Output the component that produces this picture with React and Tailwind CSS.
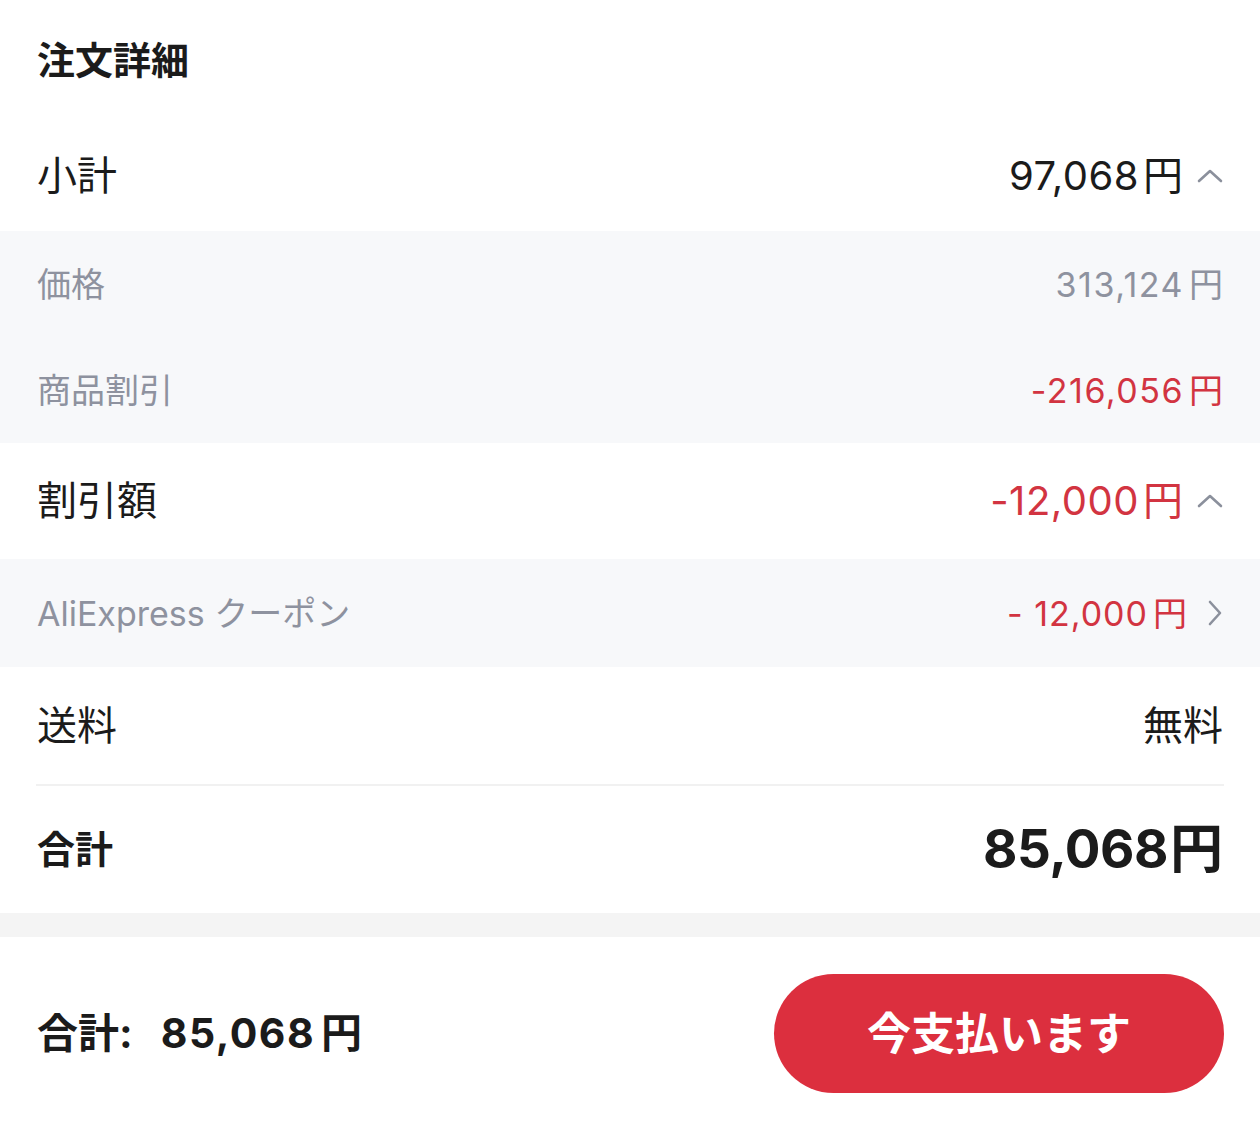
import React from 'react';

const font = { fontFamily: 'Inter, "Noto Sans CJK JP", sans-serif' };

function ChevronUp() {
  return (
    <svg width="26" height="16" viewBox="0 0 26 16" fill="none" className="ml-[14px]">
      <path d="M2 13 L13 3 L24 13" stroke="#8b909c" strokeWidth="2.6" strokeLinecap="round" strokeLinejoin="round" />
    </svg>
  );
}

function ChevronRight() {
  return (
    <svg width="16" height="28" viewBox="0 0 16 28" fill="none" className="ml-[20px]">
      <path d="M3 3 L13 14 L3 25" stroke="#8b909c" strokeWidth="2.6" strokeLinecap="round" strokeLinejoin="round" />
    </svg>
  );
}

// number with a little gap before 円, like the iOS rendering
function Yen({ n, track = 'tracking-[0.5px]', gap = 'ml-[4px]' }) {
  return (
    <span className="flex items-baseline">
      <span className={track}>{n}</span>
      <span className={gap}>円</span>
    </span>
  );
}

function Row({ label, h, sub, valueClass = '', children }) {
  return (
    <div
      className={`flex items-center justify-between pl-[37px] pr-[37px] ${h} ${
        sub ? 'text-[34px] text-[#8e929f]' : 'text-[40px] text-[#1b1b1b]'
      }`}
    >
      <span>{label}</span>
      <span className={`flex items-center ${valueClass}`}>{children}</span>
    </div>
  );
}

export default function App() {
  return (
    <div className="w-[1260px] h-[1148px] bg-white flex flex-col" style={font}>
      <div className="h-[120px] flex items-center pl-[37px]">
        <h1 className="text-[38px] font-bold text-[#1b1b1b]">注文詳細</h1>
      </div>

      <Row label="小計" h="h-[111px]">
        <Yen n="97,068" />
        <ChevronUp />
      </Row>
      <div className="bg-[#f7f8fa]">
        <Row label="価格" h="h-[106px]" sub>
          <Yen n="313,124" track="tracking-[1.5px]" gap="ml-[5px]" />
        </Row>
        <Row label="商品割引" h="h-[106px]" sub valueClass="text-[#d23441]">
          <Yen n="-216,056" track="tracking-[1.5px]" gap="ml-[5px]" />
        </Row>
      </div>

      <Row label="割引額" h="h-[116px]" valueClass="text-[#d23441]">
        <Yen n="-12,000" />
        <ChevronUp />
      </Row>
      <div className="bg-[#f7f8fa]">
        <Row label="AliExpress クーポン" h="h-[108px]" sub valueClass="text-[#d23441]">
          <Yen n="- 12,000" track="tracking-[1px]" gap="ml-[5px]" />
          <ChevronRight />
        </Row>
      </div>

      <Row label="送料" h="h-[117px]">
        <span>無料</span>
      </Row>
      <div className="mx-[36px] h-[2px] bg-[#f1f1f1]" />

      <div className="h-[127px] flex items-center justify-between px-[37px] text-[#1b1b1b]">
        <span className="text-[38px] font-bold">合計</span>
        <span className="text-[53px] font-bold">
          <Yen n="85,068" track="tracking-[-0.5px]" gap="ml-[2px]" />
        </span>
      </div>

      <div className="h-[24px] bg-[#f4f4f4]" />

      <div className="flex-1 pt-[37px]">
        <div className="flex items-center justify-between pl-[37px] pr-[36px] h-[119px]">
          <span className="flex items-baseline text-[41px] font-bold text-[#1b1b1b]">
            <span>合計:</span>
            <span className="ml-[28px]">
              <Yen n="85,068" track="tracking-[1.5px]" gap="ml-[6px]" />
            </span>
          </span>
          <button className="w-[450px] h-[119px] rounded-full bg-[#dc2f3e] text-white text-[44px] font-bold">
            今支払います
          </button>
        </div>
      </div>
    </div>
  );
}
